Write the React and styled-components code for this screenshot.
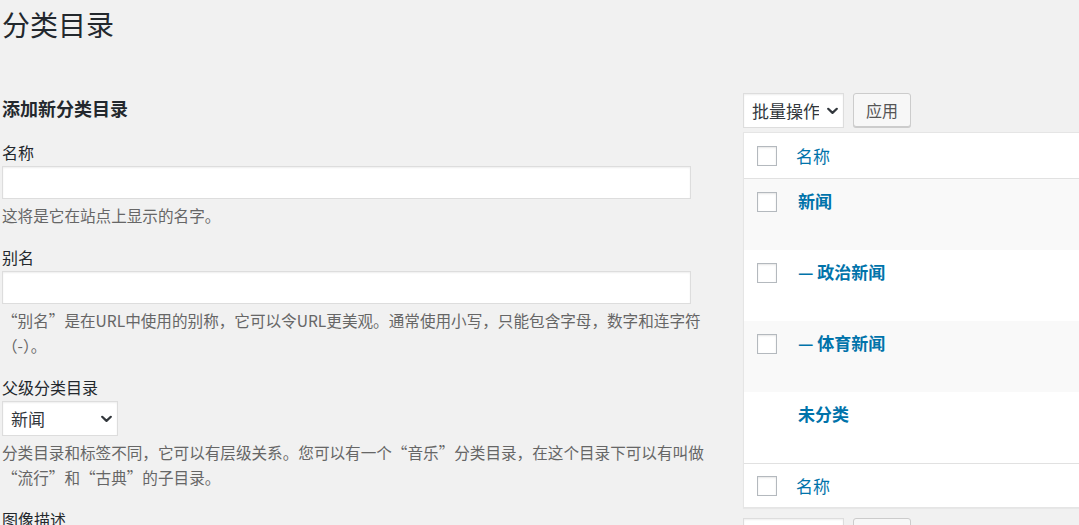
import React from "react";
import styled, { createGlobalStyle } from "styled-components";

const GlobalStyle = createGlobalStyle`
  html, body {
    margin: 0;
    padding: 0;
    background: #f1f1f1;
    overflow: hidden;
  }
  body {
    font-family: "Noto Sans CJK SC", "Liberation Sans", sans-serif;
    color: #23282d;
  }
`;

const categories = [
  { name: "新闻", depth: 0, checkable: true },
  { name: "政治新闻", depth: 1, checkable: true },
  { name: "体育新闻", depth: 1, checkable: true },
  { name: "未分类", depth: 0, checkable: false },
];

const Chevron = () => (
  <svg width="11" height="7" viewBox="0 0 11 7">
    <path
      d="M1.2 1.2 L5.5 5.4 L9.8 1.2"
      fill="none"
      stroke="#32373c"
      strokeWidth="2.2"
      strokeLinecap="round"
      strokeLinejoin="round"
    />
  </svg>
);

const Select = ({ value, width, fontSize }) => (
  <SelectWrap width={width}>
    <NativeSelect fontSize={fontSize} defaultValue={value}>
      <option>{value}</option>
    </NativeSelect>
    <ChevronBox>
      <Chevron />
    </ChevronBox>
  </SelectWrap>
);

const App = () => {
  return (
    <Page>
      <GlobalStyle />
      <Title>分类目录</Title>
      <Columns>
        <LeftCol>
          <FormTitle>添加新分类目录</FormTitle>
          <Field>
            <Label>名称</Label>
            <TextInput type="text" />
            <Help>这将是它在站点上显示的名字。</Help>
          </Field>
          <Field>
            <Label>别名</Label>
            <TextInput type="text" />
            <Help>
              “别名”是在URL中使用的别称，它可以令URL更美观。通常使用小写，只能包含字母，数字和连字符
              <br />
              （-）。
            </Help>
          </Field>
          <Field>
            <Label>父级分类目录</Label>
            <Select value="新闻" width={116} fontSize={17} />
            <Help>
              分类目录和标签不同，它可以有层级关系。您可以有一个“音乐”分类目录，在这个目录下可以有叫做
              <br />
              “流行”和“古典”的子目录。
            </Help>
          </Field>
          <Field>
            <Label>图像描述</Label>
          </Field>
        </LeftCol>

        <RightCol>
          <Toolbar>
            <Select value="批量操作" width={101} fontSize={17} />
            <ApplyButton>应用</ApplyButton>
          </Toolbar>
          <Table>
            <HeadRow>
              <CheckCell>
                <Checkbox type="checkbox" />
              </CheckCell>
              <HeadLink>名称</HeadLink>
            </HeadRow>
            {categories.map((cat, i) => (
              <Row key={cat.name} alt={i % 2 === 0}>
                <CheckCell>
                  {cat.checkable && <Checkbox type="checkbox" />}
                </CheckCell>
                <RowLink>
                  {cat.depth > 0 && "— "}
                  {cat.name}
                </RowLink>
              </Row>
            ))}
            <FootRow>
              <CheckCell>
                <Checkbox type="checkbox" />
              </CheckCell>
              <HeadLink>名称</HeadLink>
            </FootRow>
          </Table>
          <Toolbar>
            <Select value="批量操作" width={101} fontSize={17} />
            <ApplyButton>应用</ApplyButton>
          </Toolbar>
        </RightCol>
      </Columns>
    </Page>
  );
};

const Page = styled.div`
  padding-left: 2px;
  width: 1200px;
`;

const Title = styled.h1`
  margin: 6px 0 0;
  font-size: 28px;
  line-height: 36px;
  font-weight: 400;
  color: #23282d;
`;

const Columns = styled.div`
  display: flex;
  align-items: flex-start;
  margin-top: 51px;
`;

const LeftCol = styled.div`
  width: 741px;
  flex-shrink: 0;
`;

const FormTitle = styled.h2`
  margin: 3px 0 21px;
  font-size: 18px;
  line-height: 24px;
  font-weight: 700;
  color: #23282d;
`;

const Field = styled.div`
  margin-bottom: 18px;
  width: 690px;
`;

const Label = styled.label`
  display: block;
  font-size: 16px;
  line-height: 22px;
  margin-bottom: 3px;
  color: #23282d;
`;

const TextInput = styled.input`
  display: block;
  box-sizing: border-box;
  width: 689px;
  height: 33px;
  margin: 0;
  padding: 3px 8px;
  border: 1px solid #ddd;
  background: #fff;
  box-shadow: inset 0 1px 2px rgba(0, 0, 0, 0.07);
  font-family: inherit;
  font-size: 16px;
  outline: none;
`;

const Help = styled.p`
  margin: 4px 0 0;
  font-size: 15.6px;
  line-height: 25px;
  color: #666;
  white-space: nowrap;
`;

const SelectWrap = styled.div`
  position: relative;
  width: ${({ width }) => width}px;
  height: 35px;
`;

const NativeSelect = styled.select`
  appearance: none;
  -webkit-appearance: none;
  box-sizing: border-box;
  width: 100%;
  height: 100%;
  margin: 0;
  padding: 0 24px 0 8px;
  border: 1px solid #ddd;
  border-radius: 0;
  background: #fff;
  box-shadow: inset 0 1px 2px rgba(0, 0, 0, 0.07);
  font-family: inherit;
  font-size: ${({ fontSize }) => fontSize}px;
  color: #32373c;
  outline: none;
`;

const ChevronBox = styled.span`
  position: absolute;
  right: 6px;
  top: 50%;
  transform: translateY(-50%);
  display: flex;
  pointer-events: none;
`;

const RightCol = styled.div`
  width: 460px;
  flex-shrink: 0;
`;

const Toolbar = styled.div`
  display: flex;
  align-items: flex-start;
  gap: 9px;
  height: 36px;
  margin-bottom: 3px;
`;

const ApplyButton = styled.button`
  box-sizing: border-box;
  height: 34px;
  padding: 0 12px;
  border: 1px solid #ccc;
  border-radius: 3px;
  background: #f7f7f7;
  box-shadow: 0 1px 0 #ccc;
  font-family: inherit;
  font-size: 16px;
  color: #555;
  cursor: pointer;
`;

const Table = styled.div`
  background: #fff;
  border: 1px solid #e5e5e5;
  box-shadow: 0 1px 1px rgba(0, 0, 0, 0.04);
  margin-bottom: 10px;
`;

const HeadRow = styled.div`
  display: flex;
  align-items: center;
  height: 45px;
  border-bottom: 1px solid #e1e1e1;
`;

const FootRow = styled(HeadRow)`
  border-bottom: none;
  border-top: 1px solid #e1e1e1;
  height: 43px;
`;

const Row = styled.div`
  display: flex;
  align-items: flex-start;
  height: 71px;
  background: ${({ alt }) => (alt ? "#f9f9f9" : "#fff")};
`;

const CheckCell = styled.div`
  box-sizing: border-box;
  width: 52px;
  flex-shrink: 0;
  padding-left: 13px;
  display: flex;
  align-items: center;
  ${Row} & {
    padding-top: 13px;
  }
`;

const Checkbox = styled.input`
  appearance: none;
  -webkit-appearance: none;
  box-sizing: border-box;
  width: 20px;
  height: 20px;
  margin: 0;
  border: 1px solid #b4b9be;
  background: #fff;
  box-shadow: inset 0 1px 2px rgba(0, 0, 0, 0.1);
  border-radius: 0;
`;

const HeadLink = styled.a`
  font-size: 17px;
  line-height: 24px;
  color: #0073aa;
  text-decoration: none;
`;

const RowLink = styled.a`
  padding-top: 10px;
  padding-left: 2px;
  font-size: 17px;
  line-height: 24px;
  font-weight: 700;
  color: #0073aa;
  text-decoration: none;
`;

export default App;
